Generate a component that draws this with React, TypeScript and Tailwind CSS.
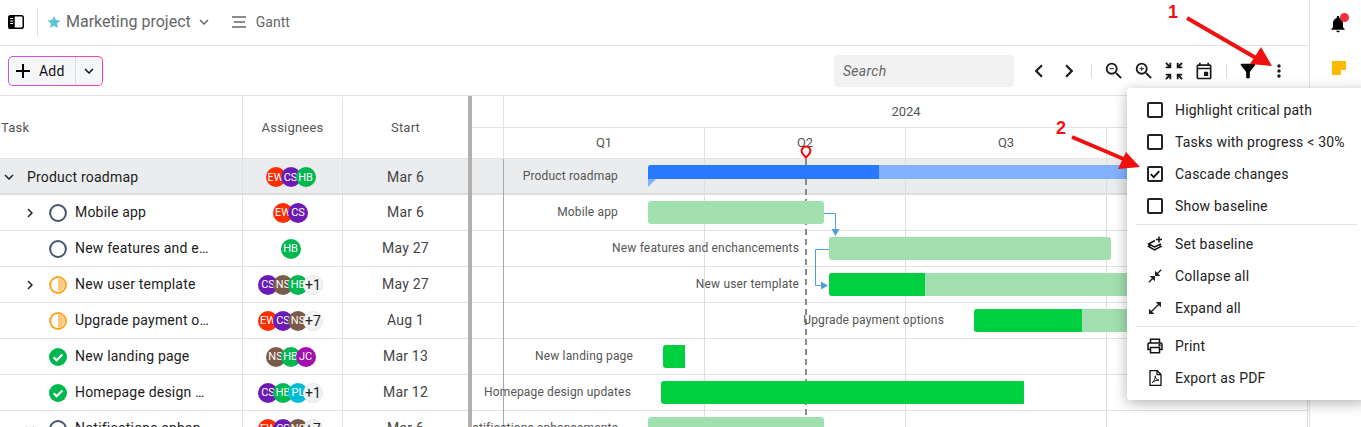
import React from "react";
import { MdAdd, MdKeyboardArrowDown, MdKeyboardArrowRight, MdChevronLeft, MdChevronRight, MdOutlineZoomIn, MdOutlineZoomOut, MdZoomInMap, MdOutlineEvent, MdFilterAlt, MdMoreVert, MdCloseFullscreen, MdOpenInFull, MdNotifications } from "react-icons/md";

const avatarColors: Record<string, string> = {
  EW: "bg-[#ff2d00]",
  CS: "bg-[#6a1ab5]",
  HB: "bg-[#00b84f]",
  NS: "bg-[#7b5a4a]",
  JC: "bg-[#a30fb0]",
  PL: "bg-[#00bcd9]",
};

function Avatars({ names, extra }: { names: string[]; extra?: string }) {
  return (
    <div className="flex items-center pr-[4px]">
      {names.map((n, i) => (
        <div key={n} className={`w-5 h-5 rounded-full flex items-center justify-center overflow-hidden text-white text-[11px] tracking-normal leading-none shrink-0 ${avatarColors[n]} ${i > 0 ? "-ml-[5px]" : ""}`}>
          {n}
        </div>
      ))}
      {extra && (
        <div className="w-5 h-5 -ml-[5px] rounded-full flex items-center justify-center bg-[#f1f2f4] border border-[#e8e8e8] text-[#222] text-[14px] tracking-normal leading-none shrink-0">{extra}</div>
      )}
    </div>
  );
}

function Status({ kind }: { kind: "open" | "half" | "done" }) {
  if (kind === "open")
    return (
      <svg width="18" height="18" viewBox="0 0 18 18" className="shrink-0">
        <circle cx="9" cy="9" r="7.9" fill="#fff" stroke="#44546f" strokeWidth="2" />
      </svg>
    );
  if (kind === "half")
    return (
      <svg width="18" height="18" viewBox="0 0 18 18" className="shrink-0">
        <circle cx="9" cy="9" r="7.9" fill="#fff" stroke="#ffa31a" strokeWidth="2" />
        <path d="M9 2.5a6.5 6.5 0 0 1 0 13z" fill="#ffc880" />
      </svg>
    );
  return (
    <svg width="18" height="18" viewBox="0 0 18 18" className="shrink-0">
      <circle cx="9" cy="9" r="9" fill="#00b84f" />
      <path d="M4.6 9.3l3 3 5.8-5.800" fill="none" stroke="#fff" strokeWidth="2.2" />
    </svg>
  );
}

type Row = {
  name: string;
  chevron?: "right" | "down";
  status?: "open" | "half" | "done";
  names: string[];
  extra?: string;
  start: string;
};

const rows: Row[] = [
  { name: "Mobile app", chevron: "right", status: "open", names: ["EW", "CS"], start: "Mar 6" },
  { name: "New features and e…", status: "open", names: ["HB"], start: "May 27" },
  { name: "New user template", chevron: "right", status: "half", names: ["CS", "NS", "HB"], extra: "+1", start: "May 27" },
  { name: "Upgrade payment o…", status: "half", names: ["EW", "CS", "NS"], extra: "+7", start: "Aug 1" },
  { name: "New landing page", status: "done", names: ["NS", "HB", "JC"], start: "Mar 13" },
  { name: "Homepage design …", status: "done", names: ["CS", "HB", "PL"], extra: "+1", start: "Mar 12" },
  { name: "Notifications enhan…", chevron: "down", status: "open", names: ["EW", "CS", "NS"], extra: "+7", start: "Mar 6" },
];

function TableRow({ r }: { r: Row }) {
  return (
    <div className="flex h-9 border-b border-[#e3e3e3] text-[14px] tracking-[0.2px] text-[#1c1c1c] shrink-0">
      <div className="w-[243px] border-r border-[#e3e3e3] flex items-center pl-[21px] shrink-0">
        <div className="w-[18px] flex justify-center shrink-0">
          {r.chevron === "right" && <MdKeyboardArrowRight size={18} className="text-[#222]" />}
          {r.chevron === "down" && <MdKeyboardArrowDown size={18} className="text-[#222]" />}
        </div>
        <div className="ml-[10px] mr-[8px]">{r.status && <Status kind={r.status} />}</div>
        <span className="whitespace-nowrap">{r.name}</span>
      </div>
      <div className="w-[100px] border-r border-[#e3e3e3] flex items-center justify-center shrink-0">
        <Avatars names={r.names} extra={r.extra} />
      </div>
      <div className="flex-1 flex items-center justify-center text-[#444]">{r.start}</div>
    </div>
  );
}

function Label({ children }: { children: React.ReactNode }) {
  return <span className="absolute right-full mr-[30px] top-[-1px] h-[23px] flex items-center whitespace-nowrap text-[12px] tracking-[0.16px] text-[#555]">{children}</span>;
}

function MenuCheck({ label, checked }: { label: string; checked?: boolean }) {
  return (
    <div className="h-8 flex items-center pl-[20px]">
      <div className="w-[16px] h-[16px] border-2 border-[#222] rounded-[2px] flex items-center justify-center shrink-0">
        {checked && (
          <svg width="12" height="12" viewBox="0 0 12 12">
            <path d="M1.800 6.200l2.900 2.900 5.500-6" fill="none" stroke="#111" strokeWidth="1.900" />
          </svg>
        )}
      </div>
      <span className="ml-[12px] text-[14px] tracking-[0.2px] text-[#222] whitespace-nowrap">{label}</span>
    </div>
  );
}

function MenuIcon({ icon, label }: { icon: React.ReactNode; label: string }) {
  return (
    <div className="h-8 flex items-center pl-[19px]">
      <div className="w-[18px] h-[18px] flex items-center justify-center shrink-0 text-[#222]">{icon}</div>
      <span className="ml-[11px] text-[14px] tracking-[0.2px] text-[#222] whitespace-nowrap">{label}</span>
    </div>
  );
}

export default function App() {
  return (
    <div className="relative flex w-[1361px] h-[427px] overflow-hidden bg-white font-['Roboto',sans-serif]">
      <div className="w-[1310px] shrink-0 border-r border-[#e3e3e3] flex flex-col">
        {/* top bar */}
        <div className="h-[46px] shrink-0 border-b border-[#e3e3e3] flex items-center pb-[1px]">
          <svg width="16" height="14" viewBox="0 0 16 14" className="ml-[8px] shrink-0">
            <rect x="0.75" y="0.75" width="14.5" height="12.5" rx="1.8" fill="#fff" stroke="#000" strokeWidth="1.5" />
            <rect x="0.75" y="0.75" width="6" height="12.5" fill="#000" />
            <path d="M2.200 3.500h3M2.200 6h3M2.200 8.500h3" stroke="#fff" strokeWidth="1" />
          </svg>
          <div className="w-px h-[30px] bg-[#e3e3e3] ml-[13px]" />
          <svg width="14" height="14" viewBox="0 0 24 24" className="ml-[9px] shrink-0">
            <path d="M12 1.500l3.300 7 7.700.9-5.700 5.200 1.500 7.600L12 18.400l-6.800 3.800 1.500-7.600L1 9.400l7.700-.9z" fill="#5cc3d6" />
          </svg>
          <span className="ml-[5px] text-[16px] text-[#666] whitespace-nowrap">Marketing project</span>
          <MdKeyboardArrowDown size={18} className="ml-[4px] text-[#666]" />
          <svg width="15" height="12" viewBox="0 0 15 12" className="ml-[19px] shrink-0">
            <path d="M0 1h14M2 6h11M0 11h14" stroke="#666" strokeWidth="1.400" />
          </svg>
          <span className="ml-[9px] text-[14px] text-[#666]">Gantt</span>
        </div>
        {/* toolbar */}
        <div className="h-[50px] shrink-0 border-b border-[#e3e3e3] flex items-center pl-[8px] pr-[20px]">
          <div className="h-[30px] w-[95px] rounded-[5px] p-px bg-[linear-gradient(90deg,#c653f0,#ff3fa4)]">
            <div className="h-full bg-[#f5f6f8] rounded-[4px] flex items-center text-[14px] tracking-[0.2px] text-[#111]">
              <MdAdd size={24} className="ml-[2px] text-[#000] shrink-0" />
              <span className="ml-[4px] pt-[2px]">Add</span>
              <div className="ml-auto w-[27px] h-full border-l border-[#dcdcdc] flex items-center justify-center">
                <MdKeyboardArrowDown size={18} className="text-[#111]" />
              </div>
            </div>
          </div>
          <div className="ml-auto flex items-center text-[#1a1a1a] pt-[1px]">
            <div className="w-[180px] h-8 rounded-[4px] bg-[#f2f2f2] flex items-center pl-[9px] text-[14px] italic tracking-[0.3px] text-[#666]">Search</div>
            <MdChevronLeft size={26} className="ml-[12px]" />
            <MdChevronRight size={26} className="ml-[4px]" />
            <div className="w-px h-[14px] bg-[#ddd] ml-[9px]" />
            <MdOutlineZoomOut size={22} className="ml-[11px]" />
            <MdOutlineZoomIn size={22} className="ml-[8px]" />
            <MdZoomInMap size={22} className="ml-[8px]" />
            <MdOutlineEvent size={20} className="ml-[9px]" />
            <div className="w-px h-[14px] bg-[#ddd] ml-[12px]" />
            <MdFilterAlt size={22} className="ml-[10px] text-black" />
            <MdMoreVert size={20} className="ml-[10px]" />
          </div>
        </div>
        {/* body */}
        <div className="flex-1 flex min-h-0">
          {/* table */}
          <div className="w-[468px] shrink-0 flex flex-col overflow-hidden">
            <div className="h-[63px] shrink-0 flex border-b border-[#e3e3e3] text-[13px] tracking-[0.2px] text-[#555] pt-[1px]">
              <div className="w-[243px] border-r border-[#e3e3e3] flex items-center pl-[1px]">Task</div>
              <div className="w-[100px] border-r border-[#e3e3e3] flex items-center justify-center">Assignees</div>
              <div className="flex-1 flex items-center justify-center">Start</div>
            </div>
            <div className="h-9 shrink-0 flex bg-[#ebecee] border-b-2 border-[#dcdddf] text-[14px] tracking-[0.2px] text-[#1c1c1c]">
              <div className="w-[243px] border-r border-[#e0e1e3] flex items-center shrink-0 pt-[2px]">
                <MdKeyboardArrowDown size={18} className="text-[#222] shrink-0" />
                <span className="ml-[9px]">Product roadmap</span>
              </div>
              <div className="w-[100px] border-r border-[#e0e1e3] flex items-center justify-center shrink-0 pt-[2px]">
                <Avatars names={["EW", "CS", "HB"]} />
              </div>
              <div className="flex-1 flex items-center justify-center text-[#444] pt-[2px]">Mar 6</div>
            </div>
            {rows.map((r) => (
              <TableRow key={r.name} r={r} />
            ))}
          </div>
          <div className="w-[4px] shrink-0 bg-[#b0b0b0]" />
          {/* timeline */}
          <div className="flex-1 relative flex flex-col overflow-hidden min-w-0">
            <div className="h-[32px] shrink-0 border-b border-[#e3e3e3] flex text-[13px] text-[#555]">
              <div className="w-[32px] border-r border-[#e3e3e3]" />
              <div className="w-[804px] shrink-0 flex items-center justify-center">2024</div>
            </div>
            <div className="h-[31px] shrink-0 border-b border-[#e3e3e3] flex text-[13px] text-[#555]">
              <div className="w-[32px] border-r border-[#e3e3e3]" />
              {["Q1", "Q2", "Q3", "Q4"].map((q) => (
                <div key={q} className="w-[201px] shrink-0 border-r border-[#e3e3e3] flex items-center justify-center">{q}</div>
              ))}
            </div>
            {/* today pin */}
            <svg width="14" height="14" viewBox="0 0 14 14" className="absolute left-[327px] top-[49px] z-20">
              <path d="M7 12.600C5 10.400 2.600 8.400 2.600 5.800a4.400 4.400 0 0 1 8.800 0c0 2.600-2.400 4.600-4.400 6.800z" fill="#fff" stroke="#f00" strokeWidth="2" />
            </svg>
            <div className="relative flex-1 min-h-0">
              {/* gridlines */}
              <div className="absolute inset-0 z-[5] flex pointer-events-none">
                <div className="w-[32px] shrink-0 border-r border-[#a8a8a8]" />
                {[0, 1, 2, 3].map((i) => (
                  <div key={i} className="w-[201px] shrink-0 border-r border-[#dedede]" />
                ))}
              </div>
              <div className="absolute left-[333px] top-0 bottom-0 w-[2px] z-[6] bg-[repeating-linear-gradient(to_bottom,#8a8a8a_0,#8a8a8a_6px,transparent_6px,transparent_10px)]" />
              {/* rows */}
              <div className="h-9 relative bg-[#ebecee] border-b-2 border-[#dcdddf]">
                <div className="absolute z-10 left-[176px] top-[6px] w-[700px] h-[14px] rounded-tl-[3px] flex bg-[#82b1ff]">
                  <Label>Product roadmap</Label>
                  <div className="w-[231px] h-full rounded-tl-[3px] bg-[#2979ff]" />
                  <div className="absolute left-0 top-full w-0 h-0 border-t-[8px] border-r-[8px] border-t-[#82b1ff] border-r-transparent" />
                </div>
              </div>
              <div className="h-9 relative border-b border-[#e3e3e3]">
                <div className="absolute z-10 left-[176px] top-[6px] w-[176px] h-[23px] rounded-[3px] bg-[#a2dfae]"><Label>Mobile app</Label></div>
              </div>
              <div className="h-9 relative border-b border-[#e3e3e3]">
                <div className="absolute z-10 left-[357px] top-[6px] w-[282px] h-[23px] rounded-[3px] bg-[#a2dfae]"><Label>New features and enchancements</Label></div>
              </div>
              <div className="h-9 relative border-b border-[#e3e3e3]">
                <div className="absolute z-10 left-[357px] top-[6px] w-[400px] h-[23px] rounded-l-[3px] bg-[#a2dfae]">
                  <Label>New user template</Label>
                  <div className="w-[96px] h-full rounded-l-[3px] bg-[#00cf40]" />
                </div>
              </div>
              <div className="h-9 relative border-b border-[#e3e3e3]">
                <div className="absolute z-10 left-[502px] top-[6px] w-[300px] h-[23px] rounded-l-[3px] bg-[#a2dfae]">
                  <Label>Upgrade payment options</Label>
                  <div className="w-[108px] h-full rounded-l-[3px] bg-[#00cf40]" />
                </div>
              </div>
              <div className="h-9 relative border-b border-[#e3e3e3]">
                <div className="absolute z-10 left-[191px] top-[6px] w-[22px] h-[23px] rounded-l-[3px] bg-[#00cf40]"><Label>New landing page</Label></div>
              </div>
              <div className="h-9 relative border-b border-[#e3e3e3]">
                <div className="absolute z-10 left-[189px] top-[6px] w-[363px] h-[23px] rounded-l-[3px] bg-[#00cf40]"><Label>Homepage design updates</Label></div>
              </div>
              <div className="h-9 relative border-b border-[#e3e3e3]">
                <div className="absolute z-10 left-[176px] top-[6px] w-[176px] h-[23px] rounded-[3px] bg-[#a2dfae]"><Label>Notifications enhancements</Label></div>
              </div>
              {/* connectors */}
              <svg width="60" height="100" viewBox="0 0 60 100" className="absolute left-[333px] top-[36px] z-[11]">
                <path d="M19 18.500h11.500v17" fill="none" stroke="#4d9de0" strokeWidth="1" />
                <path d="M26.500 34h8l-4 7z" fill="#4d9de0" />
                <path d="M24 54.500h-13.500v36h6" fill="none" stroke="#4d9de0" strokeWidth="1" />
                <path d="M16 86.500l7 4-7 4z" fill="#4d9de0" />
              </svg>
            </div>
          </div>
        </div>
      </div>
      {/* right rail */}
      <div className="flex-1 flex flex-col items-center">
        <MdNotifications size={20} className="mt-[14px] ml-[4px] text-black" />
        <div className="w-[14px] h-[14px] mt-[27px] ml-[7px] bg-[#ffba00] relative">
          <div className="absolute right-0 bottom-0 w-[5px] h-[5px] bg-white" />
        </div>
      </div>
      <div className="absolute left-[1340px] top-[13px] w-[9px] h-[9px] rounded-full bg-[#f4303f]" />
      {/* overflow menu */}
      <div className="absolute left-[1127px] top-[88px] w-[240px] bg-white rounded-[3px] py-[6px] z-30 shadow-[0_3px_14px_rgba(0,0,0,0.3)]">
        <MenuCheck label="Highlight critical path" />
        <MenuCheck label="Tasks with progress < 30%" />
        <MenuCheck label="Cascade changes" checked />
        <MenuCheck label="Show baseline" />
        <div className="h-px bg-[#e3e3e3] mt-[2px] mb-[3px] ml-[9px] mr-[10px]" />
        <MenuIcon
          label="Set baseline"
          icon={
            <svg width="16" height="16" viewBox="0 0 16 16" fill="none" stroke="#111" strokeWidth="1.500">
              <path d="M8 4.500L1.500 8l6 3 6.500-3" />
              <path d="M1.500 8.200l1.500 1.200-1.500 1.100 6 3.500 6.500-3.500-1.500-1" />
              <path d="M12 .5v6M9 3.500h6" />
            </svg>
          }
        />
        <MenuIcon label="Collapse all" icon={<MdCloseFullscreen size={16} />} />
        <MenuIcon label="Expand all" icon={<MdOpenInFull size={16} />} />
        <div className="h-px bg-[#e3e3e3] mt-[2px] mb-[3px] ml-[9px] mr-[10px]" />
        <MenuIcon
          label="Print"
          icon={
            <svg width="16" height="16" viewBox="0 0 16 16" fill="none" stroke="#111" strokeWidth="1.500">
              <path d="M3.500 5V1.200h9V5" />
              <path d="M3.500 11.500H1V6.300q0-1.300 1.300-1.300h11.400q1.300 0 1.300 1.300v5.200h-2.500" />
              <path d="M3.500 9.500h9v5.300h-9z" />
              <circle cx="12.500" cy="7.200" r="0.500" fill="#111" />
            </svg>
          }
        />
        <MenuIcon
          label="Export as PDF"
          icon={
            <svg width="13" height="16" viewBox="0 0 13 16" fill="none" stroke="#111" strokeWidth="1.300">
              <path d="M1 .7h7.300L12 4.400V15.300H1z" />
              <path d="M8 1v3.500h4" />
              <path d="M3 12.800c2-1 3.500-5 3.200-7 0 2 1.400 4 3.800 4.300-2.500 0-5.500 1-7 2.700z" strokeWidth="1" />
            </svg>
          }
        />
      </div>
      {/* annotations */}
      <span className="absolute z-40 left-[1168px] top-[-1px] text-[18px] font-bold text-[#f01010] font-['Liberation_Sans',sans-serif]">1</span>
      <span className="absolute z-40 left-[1056px] top-[115px] text-[18px] font-bold text-[#f01010] font-['Liberation_Sans',sans-serif]">2</span>
      <svg width="1361" height="427" viewBox="0 0 1361 427" className="absolute left-0 top-0 z-40 pointer-events-none">
        <path d="M1187 18L1256 58" stroke="#f01010" strokeWidth="4" fill="none" />
        <path d="M1272 66L1261 47L1250 64z" fill="#f01010" />
        <path d="M1072 137L1126 160" stroke="#f01010" strokeWidth="4" fill="none" />
        <path d="M1140 167L1126 152L1118 169z" fill="#f01010" />
      </svg>
    </div>
  );
}
